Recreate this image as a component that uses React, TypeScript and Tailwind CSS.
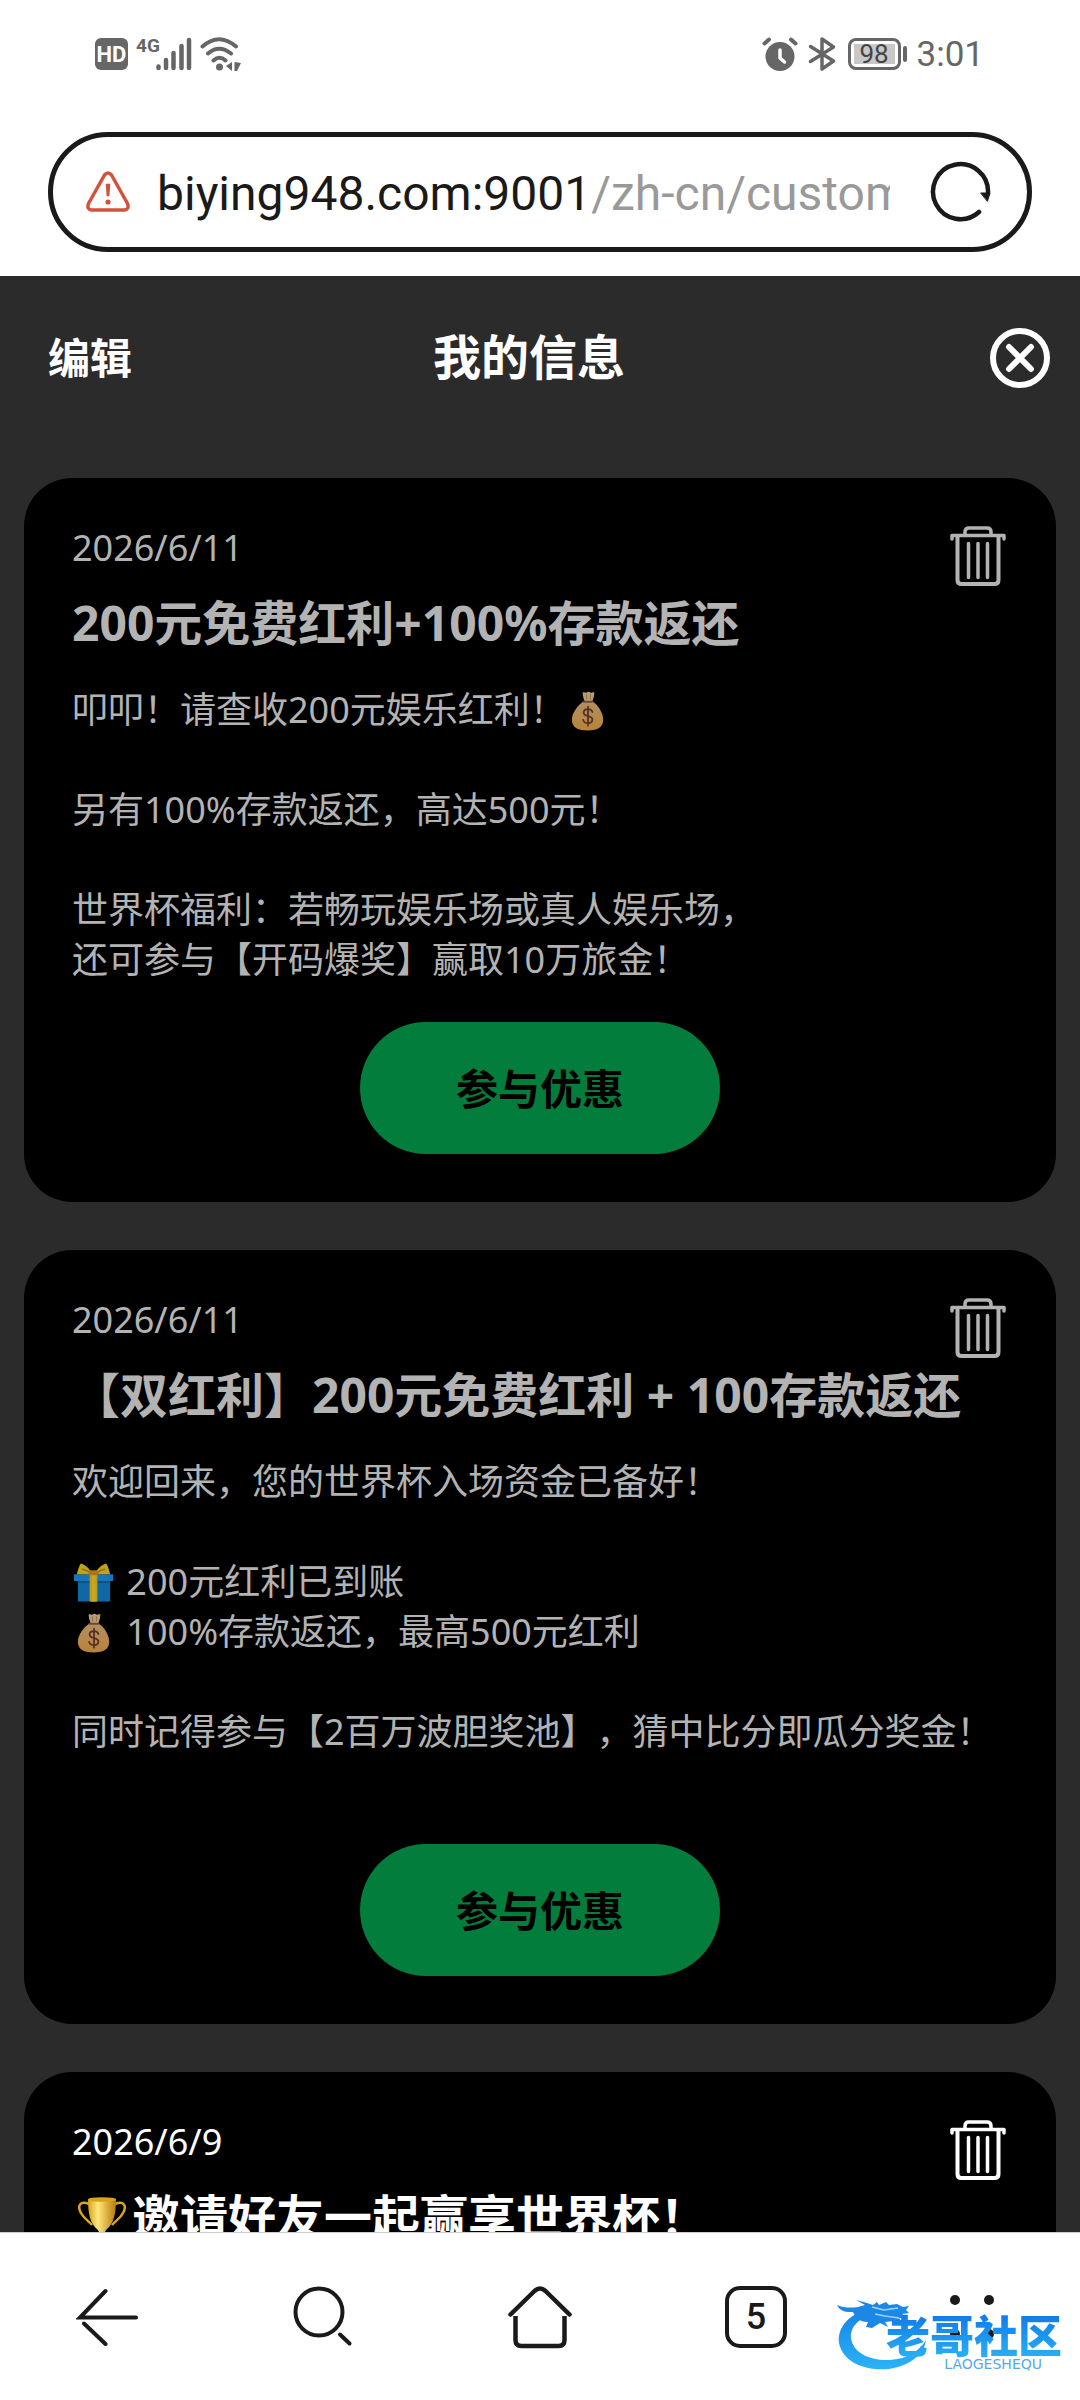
import type { ReactNode } from 'react';

type Message = {
  date: string;
  title: ReactNode;
  body: ReactNode[];
  unread?: boolean;
  action?: string;
};

const MoneyBag = () => (
  <svg role="img" aria-label="钱袋" viewBox="0 0 46 42" className="inline-block h-[42px] w-[45px] align-[-9px]">
    <defs>
      <linearGradient id="bag" x1="0" y1="0" x2="0" y2="1">
        <stop offset="0" stopColor="#b38d62" />
        <stop offset=".55" stopColor="#b7894e" />
        <stop offset="1" stopColor="#b98333" />
      </linearGradient>
    </defs>
    <path d="M18 11C12 15 6 23 6 30c0 7 5 11 16 11s16-4 16-11c0-7-5-15-11-19z" fill="url(#bag)" />
    <path d="M17 2c2-1 3 1 4 0s3-1 4 0 2-1 4 0c0 3-1 6-2 9h-8c-1-3-2-6-2-9z" fill="#b99a72" />
    <path d="M21 4v5M25 4v5" stroke="#8d6f4a" strokeWidth="1" />
    <path d="M18 11.500h9" stroke="#6b4a31" strokeWidth="2" strokeLinecap="round" />
    <path d="M27 22c-.5-2-2-3-4.500-3s-4.500 1.300-4.500 3.600c0 5 9 2.400 9 7.200 0 2.400-2 3.600-4.500 3.600s-4.500-1.200-4.900-3.400M22.500 16.500v19.500" fill="none" stroke="#533025" strokeWidth="1.800" strokeLinecap="round" />
  </svg>
);

const Gift = () => (
  <svg role="img" aria-label="礼物" viewBox="0 0 46 42" className="inline-block h-[42px] w-[45px] align-[-9px]">
    <path d="M6 17h33v23H6z" fill="#0f67a4" />
    <path d="M2 12h40v7H2z" fill="#1477bb" />
    <path d="M6 19h33v2H6z" fill="#0b5385" />
    <path d="M18 12h8v28h-8z" fill="#b89a1c" />
    <path d="M20 12h4v28h-4z" fill="#c5a820" />
    <path d="M21 12C18 6 13 2 9 1c-2 3-3 7-4 11zM23 12c3-6 8-10 12-11 2 3 3 7 4 11z" fill="#bfa31c" />
    <path d="M19 11c-4-3-7-4-9-4M25 11c4-3 7-4 9-4" stroke="#8f7613" strokeWidth="1.500" fill="none" />
    <rect x="17" y="8" width="10" height="5" rx="2" fill="#aa7712" />
  </svg>
);

const Trophy = () => (
  <svg role="img" aria-label="奖杯" viewBox="0 0 58 56" className="inline-block h-[56px] w-[60px] align-middle">
    <defs>
      <linearGradient id="cup" x1="0" y1="0" x2="1" y2="0">
        <stop offset="0" stopColor="#d9a11a" />
        <stop offset=".35" stopColor="#ffe77d" />
        <stop offset="1" stopColor="#b87a08" />
      </linearGradient>
    </defs>
    <path d="M16 10C7 6 4 12 8 19c3 6 8 8 11 12M42 10c9-4 12 2 8 9-3 6-8 8-11 12" fill="none" stroke="#d9a520" strokeWidth="2.500" />
    <path d="M15 5h28c0 14-2 25-10 31l-2 4v3l6 5H21l6-5v-3l-2-4C17 30 15 19 15 5z" fill="url(#cup)" />
    <ellipse cx="29" cy="5.500" rx="14" ry="2.300" fill="#d8a321" />
    <path d="M18 48h22v7H18z" fill="#7a4a12" />
  </svg>
);

const messages: Message[] = [
  {
    date: '2026/6/11',
    title: '200元免费红利+100%存款返还',
    body: [
      <>叩叩！请查收200元娱乐红利！<MoneyBag /></>,
      '',
      '另有100%存款返还，高达500元！',
      '',
      '世界杯福利：若畅玩娱乐场或真人娱乐场，',
      '还可参与【开码爆奖】赢取10万旅金！',
    ],
    action: '参与优惠',
  },
  {
    date: '2026/6/11',
    title: '【双红利】200元免费红利 + 100存款返还',
    body: [
      '欢迎回来，您的世界杯入场资金已备好！',
      '',
      <><Gift /> 200元红利已到账</>,
      <><MoneyBag /> 100%存款返还，最高500元红利</>,
      '',
      '同时记得参与【2百万波胆奖池】，猜中比分即瓜分奖金！',
      '',
    ],
    action: '参与优惠',
  },
  {
    date: '2026/6/9',
    title: <><Trophy />邀请好友一起赢享世界杯！</>,
    body: [],
    unread: true,
  },
];

function TrashIcon() {
  return (
    <svg viewBox="0 0 60 64" className="h-[64px] w-[60px]" fill="none" stroke="currentColor" strokeWidth="4" strokeLinecap="round" strokeLinejoin="round">
      <path d="M4 14v-3.500h52V14" strokeWidth="3.500" />
      <path d="M17 10V7q0-4 4-4h18q4 0 4 4v3" strokeWidth="3.500" />
      <path d="M9.500 11v44q0 4 4 4h33q4 0 4-4V11" />
      <path d="M20.500 18.500v34M30 18.500v34M39.500 18.500v34" strokeWidth="3.500" />
    </svg>
  );
}

function MessageCard({ message }: { message: Message }) {
  return (
    <article className={`flex flex-col rounded-[48px] bg-black px-12 pt-[45px] pb-12 ${message.unread ? 'text-white' : 'text-[#b3b3b3]'}`}>
      <div className="flex h-[50px] items-start justify-between">
        <time className="text-[36px] leading-[50px]">{message.date}</time>
        <button type="button" aria-label="删除" className="pt-0.5">
          <TrashIcon />
        </button>
      </div>
      <h2 className="mt-4 h-[68px] text-[48px] leading-[68px] font-bold whitespace-nowrap">{message.title}</h2>
      <div className="mt-7 text-[36px] leading-[50px]">
        {message.body.map((line, i) => (
          <p key={i} className="h-[50px] whitespace-nowrap">{line}</p>
        ))}
      </div>
      {message.action && (
        <button type="button" className="mt-[37px] h-[132px] w-[360px] self-center rounded-full bg-[#037d3b] text-[42px] font-bold text-black">
          {message.action}
        </button>
      )}
    </article>
  );
}

function StatusBar() {
  return (
    <div className="flex h-[108px] shrink-0 items-center justify-between pr-24 pl-[95px] font-[Roboto,sans-serif] text-[#666]">
      <div className="flex items-center">
        <span className="flex h-8 w-[33px] items-center justify-center rounded-[6px] bg-[#666] text-[22px] font-bold text-white">HD</span>
        <span className="ml-2 self-start text-[19px] leading-5 font-bold">4G</span>
        <svg viewBox="0 0 36 34" className="-ml-1 h-[34px] w-9" fill="none" stroke="currentColor" strokeWidth="4.500" strokeLinecap="round">
          <path d="M2.500 29.500v1.500M10 23v8M17.500 16v15M25.500 9v22M33 3v28" />
        </svg>
        <svg viewBox="0 0 42 36" className="ml-2 h-9 w-[42px]" fill="none" stroke="currentColor" strokeWidth="4" strokeLinecap="round">
          <path d="M2.500 10.500Q19 -4 36 10.500M8 17.500Q19 8 31 17.500M13.500 24.500Q19.500 19 25.500 24.500" />
          <circle cx="19.500" cy="31" r="3.500" fill="currentColor" stroke="none" />
          <path d="M32 26v9l-6-5zM34.500 26l6.500 1-4 8h-2.500z" fill="currentColor" stroke="none" />
        </svg>
      </div>
      <div className="flex items-center">
        <svg viewBox="0 0 36 36" className="h-9 w-9">
          <circle cx="18" cy="20.500" r="14.500" fill="currentColor" />
          <path d="M2.500 7.500l4.500-4M33.500 7.500l-4.500-4" stroke="currentColor" strokeWidth="4" strokeLinecap="round" />
          <path d="M18 14v8l4.500 4" stroke="#fff" strokeWidth="3.500" strokeLinecap="round" strokeLinejoin="round" fill="none" />
        </svg>
        <svg viewBox="0 0 28 36" className="ml-2.5 h-9 w-7" fill="none" stroke="currentColor" strokeWidth="3.500" strokeLinecap="round" strokeLinejoin="round">
          <path d="M2.500 10.500L25.500 25 14 33V3l11.500 8L2.500 25.500" />
        </svg>
        <span className="ml-3 flex h-8 w-[53px] items-center rounded-[8px] border-[3px] border-[#666] p-[3px]">
          <span className="flex h-full w-full items-center justify-center bg-[#c8c8c8] text-[26px] leading-5 text-[#444]">98</span>
        </span>
        <span className="ml-[2px] h-[16px] w-[4px] rounded-full bg-[#666]" />
        <span className="ml-2.5 pt-0.5 text-[35px] leading-9">3:01</span>
      </div>
    </div>
  );
}

function AddressBar() {
  return (
    <div className="shrink-0 px-12 pt-6 pb-6">
      <div className="flex h-[120px] items-center rounded-full border-[5px] border-[#1a1a1a] pr-[35px] pl-[33px]">
        <svg viewBox="0 0 44 42" className="h-[42px] w-11 shrink-0" fill="none" stroke="#d5513c" strokeWidth="3.500" strokeLinecap="round" strokeLinejoin="round">
          <path d="M18.500 4q3.500-4 7 0l16 28.500q2 6-3 6.500H5.500q-5-.5-3-6.500z" />
          <path d="M20.500 13.500h3l-.8 11h-1.400z" fill="#d5513c" strokeWidth="1.500" />
          <circle cx="22" cy="31" r="2.600" fill="#d5513c" stroke="none" />
        </svg>
        <a href="#address" className="ml-[27px] min-w-0 flex-1 overflow-hidden pt-[3px] font-[Roboto,sans-serif] text-[48px] leading-[60px] whitespace-nowrap text-[#1a1a1a]">
          biying948.com:9001<span className="text-[#999]">/zh-cn/custom</span>
        </a>
        <button type="button" aria-label="刷新" className="ml-10 shrink-0">
          <svg viewBox="0 0 62 62" className="h-[62px] w-[62px]" fill="none" stroke="#1a1a1a" strokeWidth="4.500" strokeLinecap="round">
            <path d="M49 51A27.500 27.500 0 1 1 58 32" />
            <path d="M51 32h9l-2.500 8z" fill="#1a1a1a" strokeWidth="1" strokeLinejoin="round" />
          </svg>
        </button>
      </div>
    </div>
  );
}

function Watermark() {
  return (
    <div className="pointer-events-none absolute right-[18px] bottom-[26px] h-[80px] w-[226px]">
      <svg viewBox="0 0 226 80" className="absolute inset-0 h-full w-full">
        <defs>
          <linearGradient id="dragon" x1="0" y1="0" x2="0" y2="1">
            <stop offset="0" stopColor="#1583e6" />
            <stop offset="1" stopColor="#2bb3f6" />
          </linearGradient>
        </defs>
        <path d="M34 15C14 19 1 33 3 49c4 20 27 28 50 26 20-3 35-14 37-29-7 12-20 19-36 20-20 1-37-7-39-22-1-12 9-20 24-26z" fill="url(#dragon)" />
        <path d="M1 11c7 3 14 3 21 2l7-2-9-5 11 3 6 2 4-3 2 3 7-3 3 3 8-1 6 3 6-1-3 4 3 3-7 1 5 4-8 0 3 5-8-2-9 1 3 5-8-4-8 5-6-1 2-5c-10 0-13-6-15-10-6 0-13 0-16-7z" fill="#1b88e5" />
        <path d="M36 13l12 3 14-2M39 20l10 2 14 2" stroke="#9fd0fa" strokeWidth="1.500" fill="none" />
      </svg>
      <span className="absolute top-5 right-0 bg-linear-to-b from-[#1479e6] to-[#2ab0f5] bg-clip-text text-[44px] leading-[44px] font-black text-transparent">老哥社区</span>
      <span className="absolute right-[20px] bottom-[3px] font-['DejaVu_Sans',sans-serif] text-[14px] leading-[14px] text-[#55a9ec]">LAOGESHEQU</span>
    </div>
  );
}

function BottomNav() {
  return (
    <nav className="relative grid h-[168px] shrink-0 grid-cols-5 items-center justify-items-center border-t border-[#ccc] bg-white text-[#1a1a1a]">
      <button type="button" aria-label="返回">
        <svg viewBox="0 0 64 64" className="h-16 w-16" fill="none" stroke="currentColor" strokeWidth="4" strokeLinecap="round">
          <path d="M60 32.500H4L29.500 6M8 38.500L29.500 59" />
        </svg>
      </button>
      <button type="button" aria-label="搜索">
        <svg viewBox="0 0 64 64" className="h-16 w-16" fill="none" stroke="currentColor" strokeWidth="4" strokeLinecap="round">
          <circle cx="27" cy="27" r="23.500" />
          <path d="M48 49.500l9.500 9" />
        </svg>
      </button>
      <button type="button" aria-label="主页">
        <svg viewBox="0 0 64 64" className="h-16 w-16" fill="none" stroke="currentColor" strokeWidth="4.500" strokeLinecap="round" strokeLinejoin="round">
          <path d="M2.500 29.500L26.500 6q5.500-5 11 0l24 23.500" />
          <path d="M7.500 31v24q0 6 6 6h37q6 0 6-6V31" strokeLinecap="butt" />
        </svg>
      </button>
      <button type="button" aria-label="标签页" className="flex h-[62px] w-[62px] items-center justify-center rounded-[15px] border-4 border-[#1a1a1a] font-[Roboto,sans-serif] text-[36px] leading-9 font-medium">
        5
      </button>
      <button type="button" aria-label="菜单" className="grid grid-cols-2 gap-6">
        <span className="h-2.5 w-2.5 rounded-full bg-current" />
        <span className="h-2.5 w-2.5 rounded-full bg-current" />
        <span className="h-2.5 w-2.5 rounded-full bg-current" />
        <span className="h-2.5 w-2.5 rounded-full bg-current" />
      </button>
      <Watermark />
    </nav>
  );
}

export default function App() {
  return (
    <div lang="zh-CN" className="flex h-screen flex-col bg-white font-['Noto_Sans','Noto_Sans_CJK_SC',sans-serif] [text-spacing-trim:space-all]">
      <StatusBar />
      <AddressBar />
      <main className="min-h-0 flex-1 overflow-y-auto bg-[#2b2b2b] [scrollbar-width:none]">
        <header className="grid h-[164px] grid-cols-[1fr_auto_1fr] items-center pr-[30px] pl-2 text-white">
          <button type="button" className="ml-10 justify-self-start pb-0.5 text-[42px] font-bold">编辑</button>
          <h1 className="pb-0.5 text-[48px] font-bold">我的信息</h1>
          <button type="button" aria-label="关闭" className="justify-self-end">
            <svg viewBox="0 0 60 60" className="h-[60px] w-[60px]" fill="none" stroke="currentColor" strokeWidth="6" strokeLinecap="round">
              <circle cx="30" cy="30" r="27" />
              <path d="M19 19l22 22M41 19L19 41" />
            </svg>
          </button>
        </header>
        <div className="flex flex-col gap-12 px-6 pt-[38px] pb-12">
          {messages.map((message, i) => (
            <MessageCard key={i} message={message} />
          ))}
        </div>
      </main>
      <BottomNav />
    </div>
  );
}
